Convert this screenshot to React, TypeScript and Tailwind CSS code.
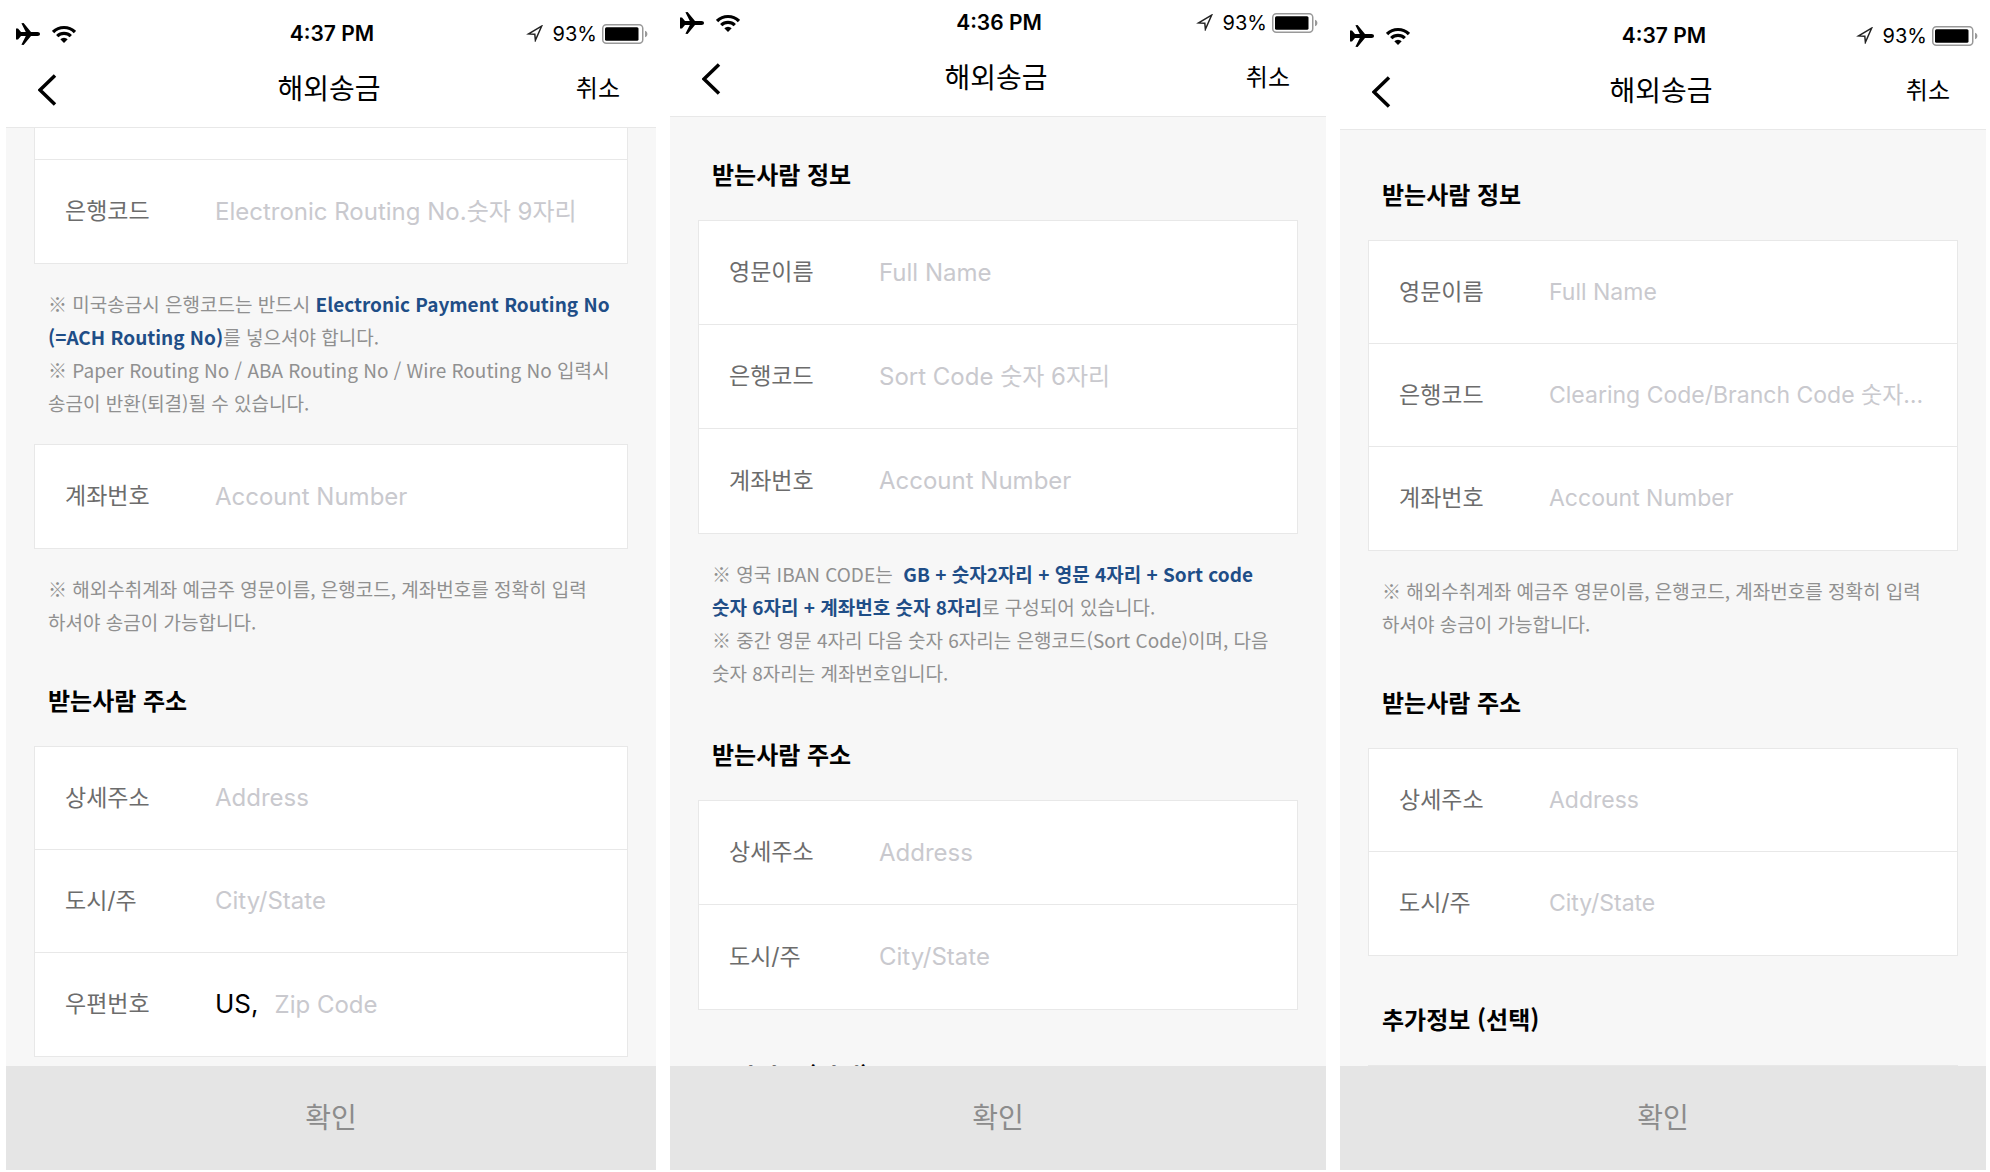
import { ReactNode } from "react";
import clsx from "clsx";

type FieldProps = {
  id: string;
  label: string;
  placeholder: string;
  prefix?: string;
  size: string;
};

const StatusBar = ({ time }: { time: string }) => (
  <div className="grid h-[30px] grid-cols-[1fr_auto_1fr] items-center pr-2 pl-2.5 font-['Inter','Noto_Sans_CJK_KR',sans-serif] text-black">
    <div className="flex items-center gap-3">
      <svg width="24" height="22" viewBox="0 0 24 22" aria-hidden="true">
        <path d="M0 5.4h2L5 9h4.8L5.4.3 7.6 0 15 9h6.5c1.6 0 2.5.9 2.5 2s-.9 2-2.5 2H15l-7.4 9-2.2-.3L9.8 13H5l-3 3.6H0z" />
      </svg>
      <svg width="24" height="18" viewBox="0 0 24 18" aria-hidden="true">
        <path d="M12 18l-3.7-3.8a5.3 5.3 0 0 1 7.4 0z" />
        <g fill="none" stroke="#000" strokeWidth="3.2">
          <path d="M5.2 11.2a9.7 9.7 0 0 1 13.6 0" />
          <path d="M1.1 7a15.5 15.5 0 0 1 21.8 0" />
        </g>
      </svg>
    </div>
    <span className="text-[21px] font-semibold">{time}</span>
    <div className="flex items-center justify-end">
      <svg
        className="mr-2.5"
        width="17"
        height="17"
        viewBox="0 0 17 17"
        aria-hidden="true"
      >
        <path
          d="M15.6 1.2L2.6 8.9l6.2.3.6 6z"
          fill="none"
          stroke="#222"
          strokeWidth="1.5"
        />
      </svg>
      <span className="mr-[5px] text-xl">93%</span>
      <svg width="46" height="20" viewBox="0 0 46 20" aria-hidden="true">
        <rect
          x="0.75"
          y="0.75"
          width="40"
          height="18.5"
          rx="3.5"
          fill="none"
          stroke="#999"
          strokeWidth="1.5"
        />
        <rect x="3" y="3.2" width="33.5" height="13.6" rx="1.5" />
        <path d="M43 6.8c3.2 1 3.2 5.4 0 6.4z" fill="#999" />
      </svg>
    </div>
  </div>
);

const Field = ({ id, label, placeholder, prefix, size }: FieldProps) => (
  <div className={clsx("flex items-center pr-8 pl-[30px]", size)}>
    <label htmlFor={id} className="w-[150px] shrink-0 text-[23px] text-[#6c6c6c]">
      {label}
    </label>
    {prefix && <span className="mr-4 text-[26px] text-black">{prefix}</span>}
    <input
      id={id}
      type="text"
      placeholder={placeholder}
      className="min-w-0 flex-1 bg-transparent text-ellipsis text-black outline-none placeholder:text-[#c9c9ce]"
    />
  </div>
);

const Card = ({ children }: { children?: ReactNode }) => (
  <div className="mx-7 shrink-0 divide-y divide-[#e8e8e8] border border-[#e8e8e8] bg-white font-['Inter','Noto_Sans_CJK_KR',sans-serif]">
    {children}
  </div>
);

const Title = ({ children }: { children: ReactNode }) => (
  <h2 className="mx-[42px] mb-7 shrink-0 text-2xl leading-9 font-bold text-black">
    {children}
  </h2>
);

const Note = ({ children }: { children: ReactNode }) => (
  <p className="mx-[42px] mt-[23px] mb-[25px] shrink-0 text-[19px] leading-[33px] whitespace-nowrap text-[#909090]">
    {children}
  </p>
);

const Point = ({ children }: { children: ReactNode }) => (
  <strong className="font-bold text-[#1f4e87]">{children}</strong>
);

type PhoneProps = {
  time: string;
  width: string;
  top: string;
  content: string;
  children: ReactNode;
};

const Phone = ({ time, width, top, content, children }: PhoneProps) => (
  <section className={clsx("flex min-w-0 flex-col bg-white", width)}>
    <header className={clsx("shrink-0", top)}>
      <StatusBar time={time} />
      <nav className="grid h-20 grid-cols-[1fr_auto_1fr] items-center border-b border-[#e8e8e8] pr-9 pb-0.5 pl-8">
        <button type="button" aria-label="뒤로" className="w-fit pt-1.5">
          <svg width="20" height="32" viewBox="0 0 20 32" aria-hidden="true">
            <path
              d="M17 1.5L2 16l15 14.5"
              fill="none"
              stroke="#000"
              strokeWidth="3.5"
            />
          </svg>
        </button>
        <h1 className="text-[28px] text-black">해외송금</h1>
        <button type="button" className="justify-self-end text-2xl text-black">
          취소
        </button>
      </nav>
    </header>
    <div
      className={clsx(
        "flex min-h-0 flex-1 flex-col overflow-hidden bg-[#f7f7f7]",
        content
      )}
    >
      {children}
    </div>
    <button
      type="button"
      className="h-[104px] shrink-0 bg-[#e5e5e5] pb-1 text-[28px] text-[#8c8c8c]"
    >
      확인
    </button>
  </section>
);

export default function App() {
  return (
    <main
      lang="ko"
      className="flex h-screen gap-3.5 bg-white pr-1 pb-0.5 pl-1.5 font-['Noto_Sans_CJK_KR',sans-serif]"
    >
      {/* US */}
      <Phone
        time="4:37 PM"
        width="flex-[650_1_0%]"
        top="pt-[18px]"
        content="justify-end pb-[9px]"
      >
        <Card>
          <Field
            id="us-name"
            label="영문이름"
            placeholder="Full Name"
            size="h-[103px] text-2xl"
          />
          <Field
            id="us-code"
            label="은행코드"
            placeholder="Electronic Routing No.숫자 9자리"
            size="h-[103px] text-2xl"
          />
        </Card>
        <Note>
          ※ 미국송금시 은행코드는 반드시{" "}
          <Point>
            Electronic Payment Routing No
            <br />
            (=ACH Routing No)
          </Point>
          를 넣으셔야 합니다.
          <br />
          ※ Paper Routing No / ABA Routing No / Wire Routing No 입력시
          <br />
          송금이 반환(퇴결)될 수 있습니다.
        </Note>
        <Card>
          <Field
            id="us-account"
            label="계좌번호"
            placeholder="Account Number"
            size="h-[103px] text-2xl"
          />
        </Card>
        <Note>
          ※ 해외수취계좌 예금주 영문이름, 은행코드, 계좌번호를 정확히 입력
          <br />
          하셔야 송금이 가능합니다.
        </Note>
        <div className="h-[19px] shrink-0" />
        <Title>받는사람 주소</Title>
        <Card>
          <Field
            id="us-address"
            label="상세주소"
            placeholder="Address"
            size="h-[103px] text-2xl"
          />
          <Field
            id="us-city"
            label="도시/주"
            placeholder="City/State"
            size="h-[103px] text-2xl"
          />
          <Field
            id="us-zip"
            label="우편번호"
            placeholder="Zip Code"
            prefix="US,"
            size="h-[103px] text-2xl"
          />
        </Card>
      </Phone>

      {/* UK */}
      <Phone
        time="4:36 PM"
        width="flex-[656_1_0%]"
        top="pt-[7px]"
        content="pt-[39px]"
      >
        <Title>받는사람 정보</Title>
        <Card>
          <Field
            id="uk-name"
            label="영문이름"
            placeholder="Full Name"
            size="h-[104px] text-2xl"
          />
          <Field
            id="uk-code"
            label="은행코드"
            placeholder="Sort Code 숫자 6자리"
            size="h-[104px] text-2xl"
          />
          <Field
            id="uk-account"
            label="계좌번호"
            placeholder="Account Number"
            size="h-[104px] text-2xl"
          />
        </Card>
        <Note>
          ※ 영국 IBAN CODE는 &nbsp;
          <Point>
            GB + 숫자2자리 + 영문 4자리 + Sort code
            <br />
            숫자 6자리 + 계좌번호 숫자 8자리
          </Point>
          로 구성되어 있습니다.
          <br />
          ※ 중간 영문 4자리 다음 숫자 6자리는 은행코드(Sort Code)이며, 다음
          <br />
          숫자 8자리는 계좌번호입니다.
        </Note>
        <div className="h-[22px] shrink-0" />
        <Title>받는사람 주소</Title>
        <Card>
          <Field
            id="uk-address"
            label="상세주소"
            placeholder="Address"
            size="h-[104px] text-2xl"
          />
          <Field
            id="uk-city"
            label="도시/주"
            placeholder="City/State"
            size="h-[104px] text-2xl"
          />
        </Card>
        <div className="h-12 shrink-0" />
        <Title>추가정보 (선택)</Title>
      </Phone>

      {/* HK */}
      <Phone
        time="4:37 PM"
        width="flex-[646_1_0%]"
        top="pt-5"
        content="pt-[46px]"
      >
        <Title>받는사람 정보</Title>
        <Card>
          <Field
            id="hk-name"
            label="영문이름"
            placeholder="Full Name"
            size="h-[103px] text-[23px]"
          />
          <Field
            id="hk-code"
            label="은행코드"
            placeholder="Clearing Code/Branch Code 숫자 6자리"
            size="h-[103px] text-[23px]"
          />
          <Field
            id="hk-account"
            label="계좌번호"
            placeholder="Account Number"
            size="h-[103px] text-[23px]"
          />
        </Card>
        <Note>
          ※ 해외수취계좌 예금주 영문이름, 은행코드, 계좌번호를 정확히 입력
          <br />
          하셔야 송금이 가능합니다.
        </Note>
        <div className="h-[19px] shrink-0" />
        <Title>받는사람 주소</Title>
        <Card>
          <Field
            id="hk-address"
            label="상세주소"
            placeholder="Address"
            size="h-[103px] text-[23px]"
          />
          <Field
            id="hk-city"
            label="도시/주"
            placeholder="City/State"
            size="h-[103px] text-[23px]"
          />
        </Card>
        <div className="h-[45px] shrink-0" />
        <Title>추가정보 (선택)</Title>
        <Card />
      </Phone>
    </main>
  );
}
